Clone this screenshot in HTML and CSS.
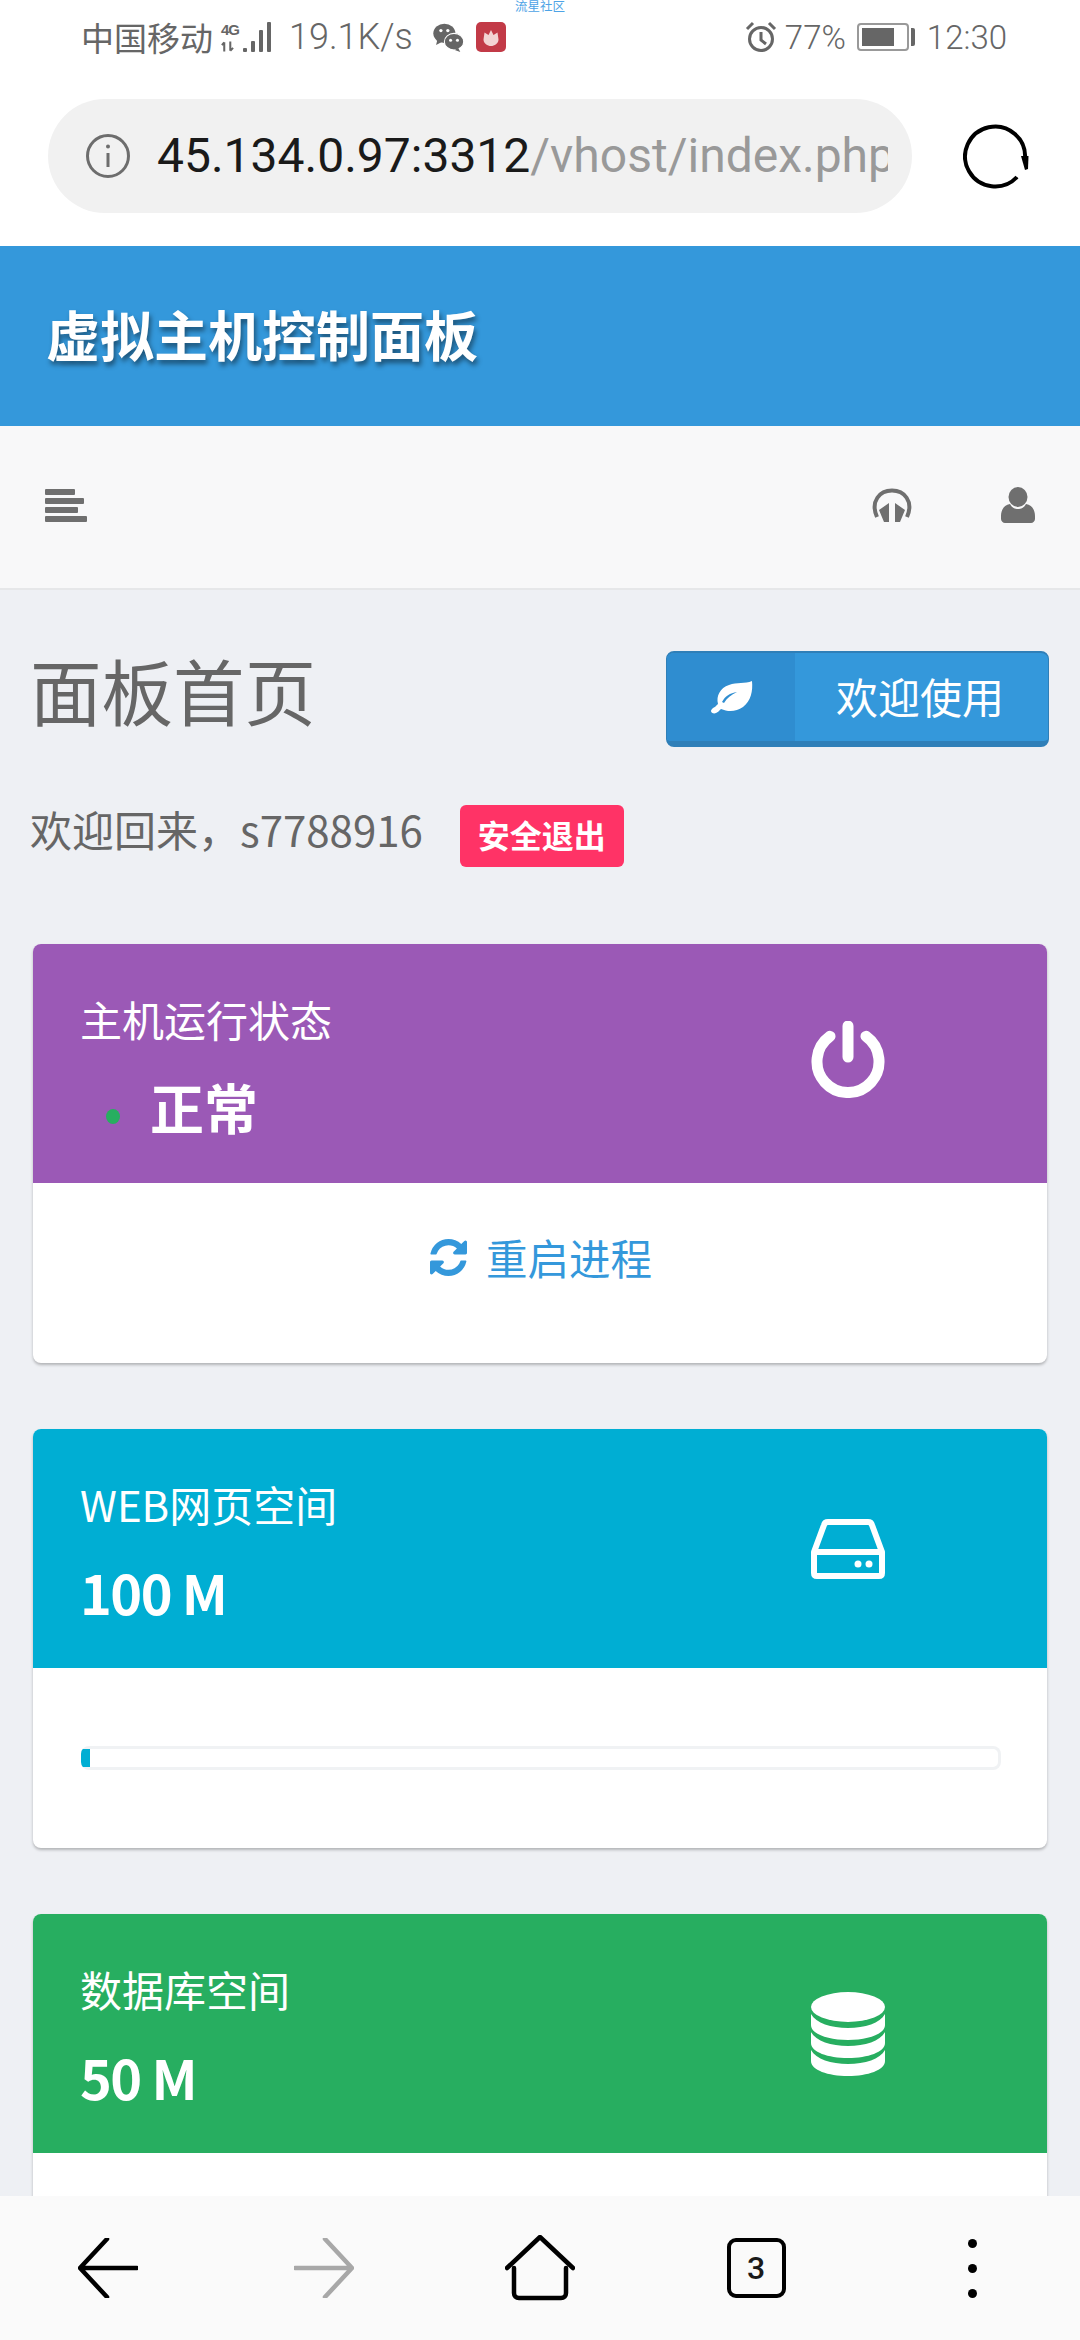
FILE: index.html
```html
<!DOCTYPE html>
<html lang="zh-CN">
<head>
    <meta charset="UTF-8">
    <meta name="viewport" content="width=device-width, initial-scale=1.0">
    <title>虚拟主机控制面板</title>
    <link rel="stylesheet" href="styles.css">
</head>
<body>
    <div class="statusbar">
        <div class="status-left">
            <span class="carrier">中国移动</span>
            <div class="net-icon">
                <div class="net-type">
                    <span class="net-4g">4G</span>
                    <svg class="net-arrows" viewBox="0 0 14 11"><path d="M3.500 11V1M1 4l2.500-3M10 0v10M13 7l-3 3"/></svg>
                </div>
                <div class="signal">
                    <i class="bar-1"></i><i class="bar-2"></i><i class="bar-3"></i><i class="bar-4"></i>
                </div>
            </div>
            <span class="speed">19.1K/s</span>
            <svg class="wechat" viewBox="0 0 44 42">
                <ellipse cx="16" cy="15" rx="16" ry="14"/>
                <path d="M6 24l-2 8 9-5z"/>
                <ellipse cx="30" cy="27" rx="14" ry="12" class="wechat-front"/>
                <path d="M36 36l3 6-8-3z"/>
                <circle cx="11" cy="11" r="2.400" class="wechat-eye"/>
                <circle cx="21" cy="11" r="2.400" class="wechat-eye"/>
                <circle cx="25" cy="25" r="2.200" class="wechat-eye"/>
                <circle cx="35" cy="25" r="2.200" class="wechat-eye"/>
            </svg>
            <svg class="app-icon" viewBox="0 0 30 30">
                <rect width="30" height="30" rx="5" fill="#c23a47"/>
                <path d="M15 8l2.500 5 4-2.500 1 7c0 4-4 6.500-7.500 6.500s-7.500-2.500-7.500-6.500l1-7 4 2.500z" fill="#f3d3d3"/>
            </svg>
        </div>
        <span class="toast-label">流星社区</span>
        <div class="status-right">
            <svg class="alarm" viewBox="0 0 32 32">
                <circle cx="16" cy="18" r="11.500"/>
                <path d="M16 11v8l5 4M2 8l6-6M30 8l-6-6"/>
            </svg>
            <span class="battery-pct">77%</span>
            <div class="battery"><div class="battery-level"></div></div>
            <div class="battery-cap"></div>
            <span class="clock">12:30</span>
        </div>
    </div>

    <div class="browserbar">
        <div class="urlbox">
            <svg class="info-icon" viewBox="0 0 44 44">
                <circle cx="22" cy="22" r="20.500"/>
                <path d="M22 19v14"/>
                <circle cx="22" cy="12.500" r="2" class="info-dot"/>
            </svg>
            <div class="url"><span class="url-host">45.134.0.97:3312</span><span class="url-path">/vhost/index.php</span></div>
        </div>
        <svg class="reload" viewBox="0 0 66 66">
            <path class="reload-arc" d="M62 36A30 30 0 1 0 54 54"/>
            <path class="reload-tip" d="M58 33h7.500l-.5 13-3 1z"/>
        </svg>
    </div>

    <div class="site-head">虚拟主机控制面板</div>

    <div class="topnav">
        <div class="hamburger"><i class="w1"></i><i class="w2"></i><i class="w3"></i><i class="w4"></i></div>
        <div class="topnav-right">
            <svg class="nav-phones" viewBox="0 0 40 34">
                <path class="phones-band" d="M5 29C-2 13 8 2.500 20 2.500s22 10.500 15 26.500"/>
                <path d="M7 22l10-7v19h-5zM33 22l-10-7v19h5z" class="phones-pad"/>
            </svg>
            <svg class="nav-user" viewBox="0 0 34 36">
                <ellipse cx="17" cy="10" rx="9.500" ry="10"/>
                <path d="M9 17c2 4 5 5 8 5s6-1 8-5c6 1 9 6 9 12v3c0 2-2 4-4 4H4c-2 0-4-2-4-4v-3c0-6 3-11 9-12z"/>
            </svg>
        </div>
    </div>

    <main class="content">
        <div class="page-head">
            <h1>面板首页</h1>
            <div class="welcome-btn">
                <div class="welcome-btn-icon">
                    <svg viewBox="0 0 44 34"><path d="M43 1c1 10-1 20-9 26-7 5-15 5-22 2-2 2-3 3-5 4-2 1-5 0-5-2 0-1 1-2 2-3 2-1 3-2 5-4-2-8 2-16 11-19 8-3 16-1 23-4zM13 22c3-6 8-9 15-10-6 3-10 6-13 11z"/></svg>
                </div>
                <span class="welcome-btn-text">欢迎使用</span>
            </div>
        </div>

        <div class="welcome-row">
            <span class="welcome-text">欢迎回来，s7788916</span>
            <span class="logout">安全退出</span>
        </div>

        <section class="card">
            <div class="card-head purple">
                <div class="card-info">
                    <div class="card-title">主机运行状态</div>
                    <div class="card-value status-value"><span class="status-dot"></span>正常</div>
                </div>
                <svg class="card-icon power" viewBox="0 0 74 77">
                    <path class="power-ring" d="M19 15.300a31 31 0 1 0 36 0"/>
                    <path class="power-bar" d="M37 5v31"/>
                </svg>
            </div>
            <div class="card-body center">
                <a class="restart">
                    <svg class="refresh-icon" viewBox="128 128 1536 1536"><path d="M1639 1056q0 5-1 7-64 268-268 434.500t-478 166.500q-146 0-282.500-55t-243.500-157l-129 129q-19 19-45 19t-45-19-19-45v-448q0-26 19-45t45-19h448q26 0 45 19t19 45-19 45l-137 137q71 66 161 102t187 36q134 0 250-65t186-179q11-17 53-117 8-23 30-23h192q13 0 22.500 9.500t9.500 22.500zm25-800v448q0 26-19 45t-45 19h-448q-26 0-45-19t-19-45 19-45l138-138q-148-137-349-137-134 0-250 65t-186 179q-11 17-53 117-8 23-30 23h-199q-13 0-22.500-9.500t-9.500-22.500v-7q65-268 270-434.500t480-166.500q146 0 284 55.500t245 156.500l130-129q19-19 45-19t45 19 19 45z"/></svg>
                    重启进程
                </a>
            </div>
        </section>

        <section class="card">
            <div class="card-head cyan">
                <div class="card-info">
                    <div class="card-title">WEB网页空间</div>
                    <div class="card-value">100 M</div>
                </div>
                <svg class="card-icon hdd" viewBox="0 0 74 60">
                    <path class="hdd-line" d="M3 33L13 6c.5-2 2-3 4-3h40c2 0 3.500 1 4 3l10 27M3 33h68v21c0 2-1 3-3 3H6c-2 0-3-1-3-3z"/>
                    <circle cx="47" cy="45" r="3.500"/>
                    <circle cx="58" cy="45" r="3.500"/>
                </svg>
            </div>
            <div class="card-body">
                <div class="progress"><div class="progress-fill" style="width: 1%"></div></div>
            </div>
        </section>

        <section class="card">
            <div class="card-head green">
                <div class="card-info">
                    <div class="card-title">数据库空间</div>
                    <div class="card-value">50 M</div>
                </div>
                <svg class="card-icon db" viewBox="0 0 74 84">
                    <ellipse cx="37" cy="15" rx="37" ry="15"/>
                    <path d="M0 22c5 9 20 14 37 14s32-5 37-14v11c0 9-17 15-37 15S0 42 0 33z"/>
                    <path d="M0 40c5 9 20 14 37 14s32-5 37-14v11c0 9-17 15-37 15S0 60 0 51z"/>
                    <path d="M0 58c5 9 20 14 37 14s32-5 37-14v11c0 9-17 15-37 15S0 78 0 69z"/>
                </svg>
            </div>
            <div class="card-body"></div>
        </section>
    </main>

    <div class="toolbar">
        <svg class="tool-icon" viewBox="0 0 60 60"><path d="M59 30H3M29 1L2 30l27 29" class="tool-line"/></svg>
        <svg class="tool-icon" viewBox="0 0 60 60"><path d="M1 30h56M31 1l27 29-27 29" class="tool-line forward-line"/></svg>
        <svg class="tool-icon home" viewBox="0 0 70 66"><path d="M2 33L35 2l33 31M9 33v25c0 3 2 5 5 5h42c3 0 5-2 5-5V33" class="tool-line"/></svg>
        <div class="tabs-count">3</div>
        <div class="more"><i></i><i></i><i></i></div>
    </div>
</body>
</html>
```

FILE: styles.css
```css
* {
    box-sizing: border-box;
}
html, body {
    margin: 0;
    padding: 0;
}
body {
    position: relative;
    width: 1080px;
    height: 2340px;
    overflow: hidden;
    font-family: "Noto Sans CJK SC", "Noto Sans", sans-serif;
    background-color: #eef0f4;
    color: #666;
}

/* phone status bar */
.statusbar {
    position: relative;
    display: flex;
    justify-content: space-between;
    align-items: center;
    height: 66px;
    padding: 8px 73px 0 81px;
    background-color: #fff;
    color: #666;
    font-family: Roboto, "Noto Sans CJK SC", sans-serif;
    font-size: 33px;
}
.status-left, .status-right {
    display: flex;
    align-items: center;
}
.carrier {
    font-family: "Noto Sans CJK SC", sans-serif;
    font-weight: 400;
    font-size: 33px;
}
.net-icon {
    display: flex;
    align-items: flex-end;
    gap: 9px;
    margin-left: 8px;
    height: 30px;
}
.net-type {
    display: flex;
    flex-direction: column;
    width: 13px;
}
.net-4g {
    font-family: "Liberation Sans", sans-serif;
    font-size: 15px;
    font-weight: bold;
    line-height: 15px;
    letter-spacing: -1px;
}
.net-arrows {
    width: 13px;
    height: 11px;
    margin-top: 4px;
    fill: none;
    stroke: #666;
    stroke-width: 2.200;
}
.signal {
    display: flex;
    align-items: flex-end;
    gap: 4px;
    height: 30px;
}
.signal i {
    display: block;
    width: 4px;
    background-color: #666;
    border-radius: 1px;
}
.bar-1 { height: 4px; }
.bar-2 { height: 11px; }
.bar-3 { height: 22px; }
.bar-4 { height: 30px; }
.speed {
    margin-left: 18px;
    font-size: 36px;
    font-weight: 300;
}
.wechat {
    width: 31px;
    height: 29px;
    margin-left: 20px;
    fill: #666;
}
.wechat-front {
    stroke: #fff;
    stroke-width: 1.500;
}
.wechat-eye {
    fill: #fff;
}
.app-icon {
    width: 30px;
    height: 30px;
    margin-left: 12px;
}
.toast-label {
    position: absolute;
    left: 515px;
    top: 0;
    font-family: "Noto Sans CJK SC", sans-serif;
    font-size: 12.500px;
    line-height: 12px;
    color: #4da3e6;
}
.alarm {
    width: 32px;
    height: 32px;
    fill: none;
    stroke: #666;
    stroke-width: 3;
}
.battery-pct {
    margin-left: 8px;
    font-weight: 300;
}
.battery {
    width: 52px;
    height: 28px;
    margin-left: 11px;
    padding: 3px;
    border: 2px solid #999;
    border-radius: 4px;
}
.battery-level {
    width: 76%;
    height: 100%;
    background-color: #666;
}
.battery-cap {
    width: 4px;
    height: 18px;
    margin-left: 2px;
    background-color: #666;
    border-radius: 0 2px 2px 0;
}
.clock {
    margin-left: 12px;
    font-weight: 300;
}

/* browser address bar */
.browserbar {
    display: flex;
    align-items: center;
    height: 180px;
    padding: 0 52px 0 48px;
    background-color: #fff;
}
.urlbox {
    display: flex;
    align-items: center;
    width: 864px;
    height: 114px;
    padding: 0 24px 0 38px;
    background-color: #f1f1f1;
    border-radius: 57px;
}
.info-icon {
    flex: none;
    width: 44px;
    height: 44px;
    fill: none;
    stroke: #6d6d6d;
    stroke-width: 3;
}
.info-dot {
    fill: #6d6d6d;
    stroke: none;
}
.url {
    margin-left: 27px;
    width: 731px;
    overflow: hidden;
    white-space: nowrap;
    font-family: Roboto, sans-serif;
    font-size: 48px;
    line-height: 60px;
}
.url-host {
    color: #1a1a1a;
}
.url-path {
    color: #999;
}
.reload {
    flex: none;
    width: 66px;
    height: 66px;
    margin-left: 51px;
}
.reload-arc {
    fill: none;
    stroke: #000;
    stroke-width: 4;
}
.reload-tip {
    fill: #000;
}

/* site header */
.site-head {
    height: 180px;
    padding-left: 46px;
    background-color: #3498db;
    color: #fff;
    font-size: 54px;
    font-weight: bold;
    line-height: 176px;
    text-shadow: 2px 4px 5px rgba(0, 0, 0, 0.45);
}

.topnav {
    display: flex;
    justify-content: space-between;
    align-items: center;
    height: 164px;
    padding: 0 45px 4px 45px;
    background-color: #f8f8f9;
    border-bottom: 2px solid #e6e7e9;
}
.hamburger {
    display: flex;
    flex-direction: column;
    gap: 3px;
}
.hamburger i {
    display: block;
    height: 6px;
    background-color: #6f6f6f;
    border-radius: 1px;
}
.w1 { width: 30px; }
.w2 { width: 39px; }
.w3 { width: 33px; }
.w4 { width: 42px; }
.topnav-right {
    display: flex;
    align-items: center;
    gap: 89px;
}
.nav-phones {
    width: 40px;
    height: 34px;
}
.phones-band {
    fill: none;
    stroke: #6f6f6f;
    stroke-width: 4;
}
.phones-pad {
    fill: #6f6f6f;
}
.nav-user {
    width: 34px;
    height: 36px;
    fill: #6f6f6f;
}

/* page content */
.content {
    padding: 61px 33px 0;
}
.page-head {
    display: flex;
    justify-content: space-between;
    align-items: center;
    height: 96px;
    margin-right: -2px;
}
h1 {
    margin: 0 0 20px -3px;
    font-size: 71.500px;
    font-weight: 400;
    line-height: 84px;
    color: #666;
}
.welcome-btn {
    display: flex;
    width: 383px;
    height: 96px;
    overflow: hidden;
    background-color: #3498db;
    border-bottom: 6px solid #2f7fb8;
    border-top: 2px solid #2f7fb8;
    border-left: 1px solid #2f7fb8;
    border-right: 1px solid #2f7fb8;
    border-radius: 8px;
    color: #fff;
}
.welcome-btn-icon {
    display: flex;
    justify-content: center;
    align-items: center;
    width: 128px;
    background-color: #2f8dd0;
}
.welcome-btn-icon svg {
    width: 44px;
    height: 34px;
    fill: #fff;
    fill-rule: evenodd;
}
.welcome-btn-text {
    margin-left: 41px;
    font-size: 42px;
    font-weight: 400;
    line-height: 86px;
}
.welcome-row {
    display: flex;
    align-items: center;
    height: 62px;
    margin-top: 58px;
    margin-left: -3px;
}
.welcome-text {
    margin-bottom: 14px;
    font-size: 42px;
    font-weight: 400;
    line-height: 62px;
    color: #666;
}
.logout {
    margin-left: 37px;
    padding: 0 18px 4px;
    background-color: #ff3366;
    border-radius: 6px;
    color: #fff;
    font-size: 32px;
    font-weight: bold;
    line-height: 58px;
}

.card {
    margin-top: 77px;
    background-color: #fff;
    border-radius: 8px;
    box-shadow: 0 2px 3px rgba(0, 0, 0, 0.25);
    overflow: hidden;
}
.card + .card {
    margin-top: 66px;
}
.card-head {
    display: flex;
    justify-content: space-between;
    align-items: center;
    height: 239px;
    padding: 0 162px 0 47px;
    color: #fff;
}
.purple { background-color: #9b59b6; }
.cyan { background-color: #00aed3; }
.green { background-color: #27ae60; }
.card-info {
    margin-top: -2px;
}
.card-title {
    font-size: 42px;
    font-weight: 400;
    line-height: 60px;
}
.card-value {
    margin-top: 28px;
    font-size: 54px;
    font-weight: 700;
    line-height: 60px;
    letter-spacing: -1.500px;
}
.status-value {
    display: flex;
    align-items: center;
    padding-left: 26px;
    font-size: 54px;
    letter-spacing: 0;
}
.status-dot {
    width: 14px;
    height: 15px;
    margin-top: 20px;
    margin-right: 30px;
    background-color: #27ae60;
    border-radius: 50%;
}
.card-icon {
    width: 74px;
    height: 78px;
}
.power {
    height: 77px;
    margin-top: -9px;
}
.power-ring, .power-bar {
    fill: none;
    stroke: #fff;
    stroke-width: 11;
    stroke-linecap: round;
}
.hdd {
    height: 60px;
    fill: #fff;
}
.hdd-line {
    fill: none;
    stroke: #fff;
    stroke-width: 6;
    stroke-linejoin: round;
}
.db {
    height: 84px;
    fill: #fff;
}
.card-body {
    display: flex;
    align-items: center;
    height: 180px;
    padding: 0 46px 0 48px;
}
.card-body.center {
    justify-content: center;
    align-items: flex-start;
    padding-top: 44px;
}
.restart {
    display: flex;
    align-items: center;
    gap: 19px;
    color: #3498db;
    font-size: 41.500px;
    font-weight: 400;
    line-height: 60px;
}
.refresh-icon {
    width: 37px;
    height: 37px;
    fill: #3498db;
}
.progress {
    width: 100%;
    height: 24px;
    padding: 3px 0;
    overflow: hidden;
    background-color: #fff;
    box-shadow: inset 0 0 0 3px #f0f2f4;
    border-radius: 8px;
}
.progress-fill {
    height: 100%;
    background-color: #00aed3;
}

/* browser toolbar, lies over the page */
.toolbar {
    position: absolute;
    left: 0;
    right: 0;
    bottom: 0;
    display: grid;
    grid-template-columns: repeat(5, 216px);
    align-items: center;
    justify-items: center;
    height: 144px;
    background-color: #fafafa;
}
.tool-icon {
    width: 60px;
    height: 60px;
}
.tool-line {
    fill: none;
    stroke: #000;
    stroke-width: 4.500;
    stroke-linecap: round;
    stroke-linejoin: round;
}
.forward-line {
    stroke: #a8a8a8;
}
.home {
    width: 70px;
    height: 66px;
}
.tabs-count {
    width: 59px;
    height: 60px;
    border: 4px solid #000;
    border-radius: 9px;
    color: #1a1a1a;
    font-family: Roboto, sans-serif;
    font-size: 32px;
    font-weight: 500;
    line-height: 52px;
    text-align: center;
}
.more {
    display: flex;
    flex-direction: column;
    gap: 16px;
}
.more i {
    display: block;
    width: 9px;
    height: 9px;
    background-color: #000;
    border-radius: 50%;
}
```
